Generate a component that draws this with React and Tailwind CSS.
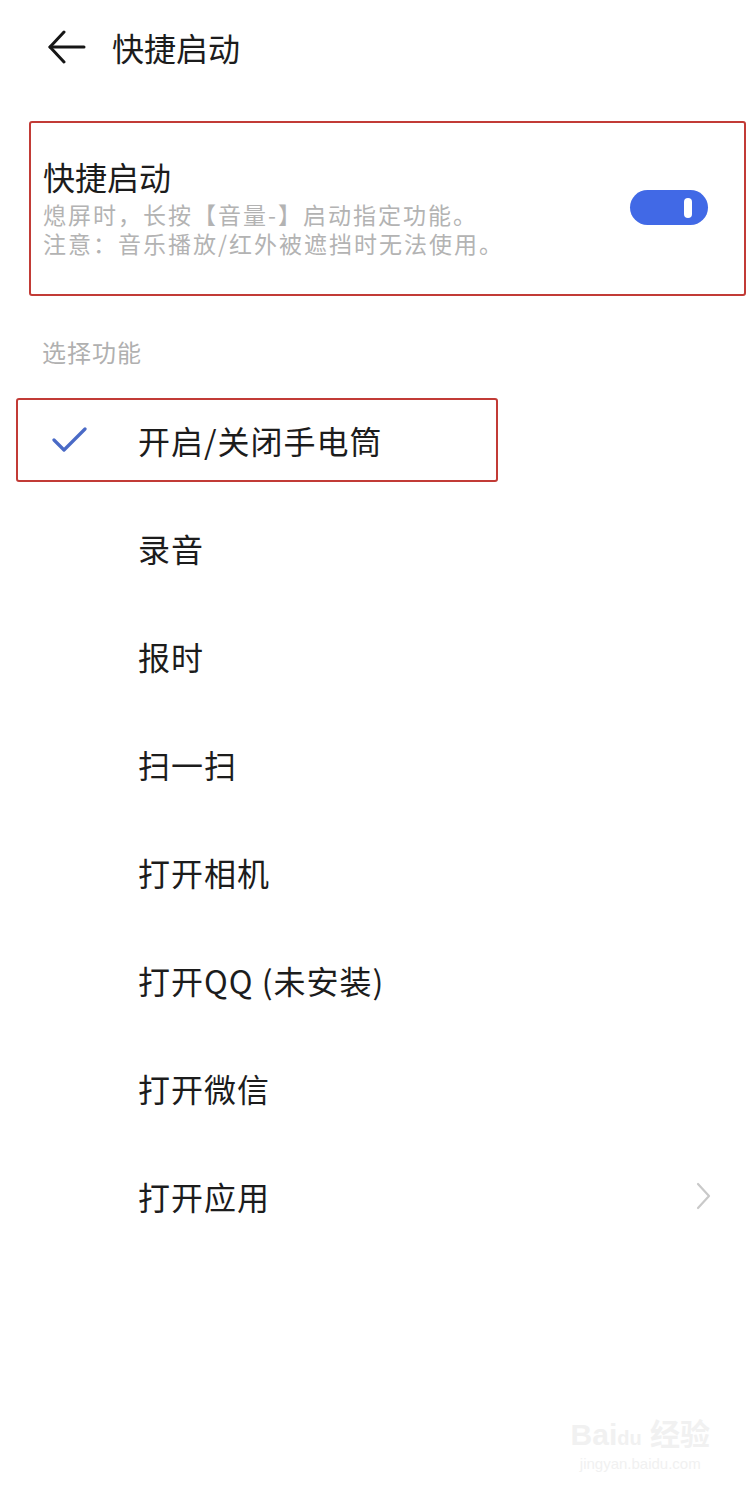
import React from "react";

const items = ["录音", "报时", "扫一扫", "打开相机", "打开QQ (未安装)", "打开微信", "打开应用"];

export default function App() {
  return (
    <div
      className="relative w-[750px] min-h-[1502px] bg-white text-[#1c1c1c]"
      style={{ fontFamily: '"Noto Sans CJK SC", "Noto Sans", sans-serif' }}
    >
      {/* 顶部栏 */}
      <div className="flex h-[94px] items-center pl-[47px]">
        <svg width="40" height="34" viewBox="0 0 40 34" fill="none" stroke="#161616" strokeWidth="3" strokeLinecap="round" strokeLinejoin="round">
          <path d="M3 17H37" />
          <path d="M17 2L3 17L17 32" />
        </svg>
        <span className="ml-[25px] text-[32px] leading-none">快捷启动</span>
      </div>

      {/* 快捷启动开关 */}
      <div className="ml-[29px] mr-[4px] mt-[27px] flex h-[175px] items-start justify-between rounded-[3px] border-2 border-[#c23b36] pl-[12px] pr-[36px]">
        <div className="pt-[33px]">
          <div className="text-[32px] leading-[40px]">快捷启动</div>
          <p className="mt-[4px] text-[23px] leading-[29px] tracking-[2px] text-[#b3b3b3]">
            熄屏时，长按【音量-】启动指定功能。
            <br />
            注意：音乐播放/红外被遮挡时无法使用。
          </p>
        </div>
        <div className="mt-[67px] flex h-[35px] w-[78px] items-center justify-end rounded-full bg-[#4169e6] pr-[16px]">
          <div className="h-[20px] w-[8px] rounded-full bg-white" />
        </div>
      </div>

      <div className="mt-[38px] pl-[42px] text-[24px] leading-[36px] tracking-[1px] text-[#b0b0b0]">选择功能</div>

      {/* 功能列表 */}
      <div className="mt-[16px]">
        <div className="flex h-[108px] items-center">
          <div className="ml-[16px] flex h-[84px] w-[482px] items-center rounded-[3px] border-2 border-[#c23b36]">
            <svg className="ml-[34px]" width="36" height="28" viewBox="0 0 36 28" fill="none" stroke="#4a6ac6" strokeWidth="3.2" strokeLinecap="round" strokeLinejoin="round">
              <path d="M2 14L12 24L33 3" />
            </svg>
            <span className="ml-[50px] text-[32px] leading-none tracking-[1px]">开启/关闭手电筒</span>
          </div>
        </div>
        {items.map((label, i) => (
          <div key={label} className="flex h-[108px] items-center justify-between pl-[138px] pr-[38px]">
            <span className="text-[32px] leading-none tracking-[1px]">{label}</span>
            {i === items.length - 1 && (
              <svg width="16" height="28" viewBox="0 0 16 28" fill="none" stroke="#c9c9c9" strokeWidth="2.2" strokeLinecap="round" strokeLinejoin="round">
                <path d="M2 2L13 14L2 26" />
              </svg>
            )}
          </div>
        ))}
      </div>

      {/* 水印 */}
      <div className="absolute right-[40px] top-[1420px] flex flex-col items-center text-[#f1f1f1]" style={{ fontFamily: '"Liberation Sans", "Noto Sans CJK SC", sans-serif' }}>
        <div className="text-[30px] font-bold leading-none">Bai<span className="text-[20px]">du</span> 经验</div>
        <div className="mt-[6px] text-[15px] leading-none">jingyan.baidu.com</div>
      </div>
    </div>
  );
}
